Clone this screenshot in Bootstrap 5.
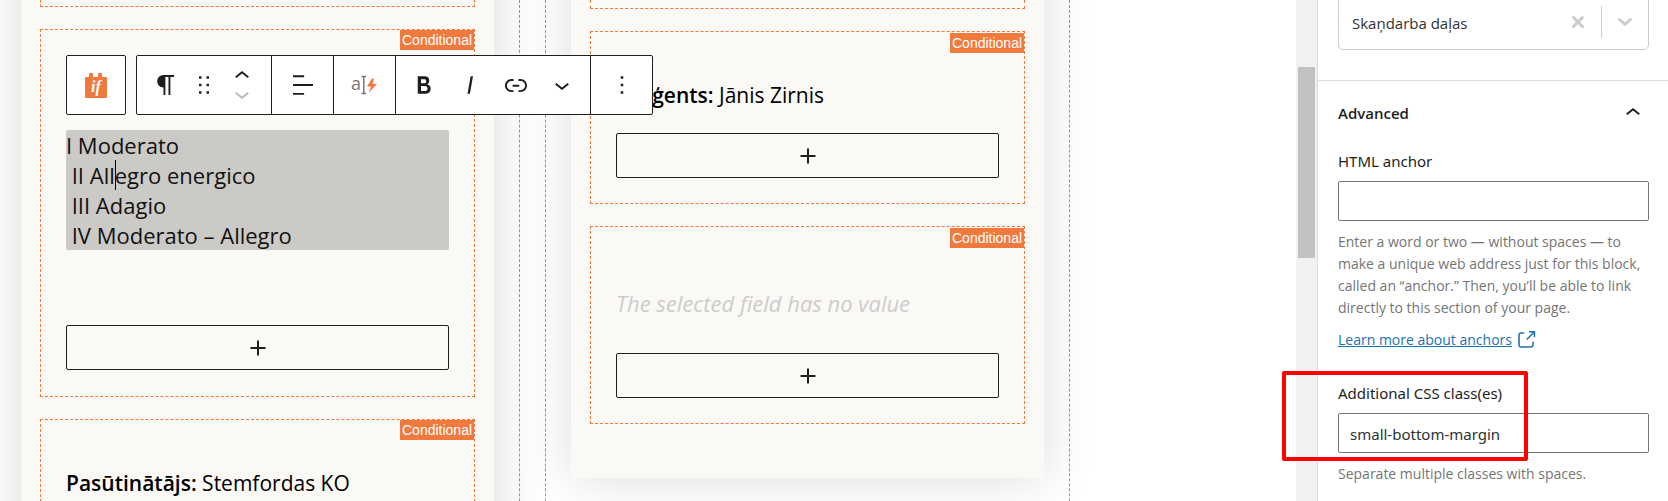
<!DOCTYPE html>
<html lang="en">
<head>
<meta charset="utf-8">
<meta name="viewport" content="width=device-width, initial-scale=1">
<title>Block editor</title>
<link href="https://cdn.jsdelivr.net/npm/bootstrap@5.3.0/dist/css/bootstrap.min.css" rel="stylesheet">
<style>
  :root { --accent: #f0793e; --ink: #1e1e1e; --cream: #fbf9f6; }
  body { font-family: "Open Sans", "Noto Sans", sans-serif; font-size: 15px; line-height: 22px; color: var(--ink); }
  svg { display: block; fill: currentColor; flex: none; }
  button { color: inherit; }

  /* canvas */
  .canvas { min-width: 0; }
  .block-cols { display: grid; grid-template-columns: 1fr 1fr; gap: 25px; margin-left: -5px; padding-right: 226px; height: 100%; }
  .outer { border: 1px dashed var(--accent); border-top: 0; border-bottom: 0; padding: 0 25px; min-width: 0; }
  .sheet { background: var(--cream); margin-top: -80px; padding: 80px 19px 54px; box-shadow: 0 0 50px rgba(0,0,0,.14); color: #000; font-size: 22px; line-height: 30px; }
  .sheet p { margin: 0; white-space: nowrap; }
  .sheet strong { font-weight: 600; }
  .cond { border: 1px dashed var(--accent); padding: 48px 25px 25px; margin-bottom: 22px; }
  .cond:last-child { margin-bottom: 0; }
  .cond-end { border-top: 0; padding: 0; height: 7px; }
  .cond-end.tall { height: 9px; }
  .cond-tag { position: absolute; top: 0; right: 0; background: var(--accent); color: #fff; font: 14px/20px "Liberation Sans", Arial, sans-serif; padding: 0 2px; width: 74px; }
  .cond-tag.low { top: 1px; }
  .space-tools { padding-top: 100px; padding-bottom: 26px; }
  .space-empty { padding-top: 61px; }
  .sheet .movements { background: #cccac6; border-radius: 2px; color: #111; margin-bottom: 75px; }
  .sheet .person { font-size: 21px; margin-bottom: 23px; }
  .sheet .empty-note { color: #ccc; font-style: italic; margin-bottom: 35px; }
  .caret-mark { display: inline-block; width: 1px; height: 30px; margin-right: -1px; background: #000; vertical-align: top; }
  .adder { height: 45px; width: 100%; background: transparent; border: 1px solid var(--ink); border-radius: 2px; color: var(--ink); }

  /* floating toolbar */
  .tools { position: absolute; top: 25px; left: 25px; z-index: 5; color: var(--ink); gap: 10px; }
  .tool-box { background: #fff; border: 1px solid var(--ink); border-radius: 2px; height: 60px; }
  .tool-set { padding: 0 5px; border-right: 1px solid var(--ink); }
  .tool-set:first-child { padding: 0 6px; }
  .tool-set:last-child { border-right: 0; }
  .tool { width: 46px; height: 58px; border: 0; background: none; padding: 0; display: flex; align-items: center; justify-content: center; }
  .tool.wide { width: 58px; }
  .tool.slim { width: 30px; }
  .tool.half { height: 18px; }
  .tool.single { width: 51px; }
  .tool:disabled { color: #bbb; }

  /* scrollbar and settings */
  .track { width: 21px; background: #f1f1f1; padding: 67px 2px 0; }
  .thumb { width: 17px; height: 191px; background: #c1c1c1; }
  .settings { width: 351px; border-left: 1px solid #ddd; background: #fff; }
  .settings-part { padding: 0 19px 0 20px; }
  .picker { height: 56px; margin-top: -6px; border: 1px solid #ccc; border-radius: 5px; }
  .picker select { appearance: none; border: 0; background: none; color: #333; padding: 2px 0 0 13px; font-size: 15px; outline: 0; min-width: 0; }
  .picker .split { width: 1px; height: 32px; background: #ccc; }
  .picker button { border: 0; background: none; padding: 0; width: 46px; display: flex; justify-content: center; color: #ccc; }
  .panel-head { border: 0; border-top: 1px solid #ddd; background: none; margin-top: 30px; padding: 0 20px; height: 64px; font-weight: 600; }
  .field-label, .field { font-family: "Noto Sans", "Open Sans", sans-serif; }
  .field-label { display: block; margin: 6px 0 9px; }
  .field { display: block; width: 100%; height: 40px; border: 1px solid #757575; border-radius: 2px; padding: 2px 11px 0; color: #2c3338; font-size: 15px; background: #fff; }
  .hint { color: #757575; font-size: 14px; line-height: 22px; margin: 10px 0; }
  .learn { color: #2271b1; }
  .marked { margin-top: 31px; }
  .marked .outline-mark { position: absolute; left: -56px; top: -11px; width: 246px; height: 90px; border: 4px solid #f00; border-radius: 2px; pointer-events: none; }
</style>
</head>
<body>
<div class="d-flex vh-100 overflow-hidden">

  <main class="canvas flex-grow-1 overflow-hidden">
    <div class="block-cols">
      <section class="outer">
        <div class="sheet">
          <div class="cond cond-end"></div>
          <div class="cond space-tools position-relative">
            <span class="cond-tag">Conditional</span>
            <div class="tools d-flex" role="toolbar" aria-label="Block tools">
              <div class="tool-box">
                <button class="tool wide" type="button" aria-label="Conditional block">
                  <svg width="22" height="26" viewBox="0 0 22 26"><path fill="#f0793e" d="M1 5h3V2q0-1 1-1h2q1 0 1 1v3h5V2q0-1 1-1h2q1 0 1 1v3h4q1 0 1 1v19q0 1-1 1H1q-1 0-1-1V6q0-1 1-1z"/><text x="11" y="20" text-anchor="middle" fill="#fff" font-family="Liberation Serif, serif" font-style="italic" font-weight="700" font-size="16">if</text></svg>
                </button>
              </div>
              <div class="tool-box d-flex">
                <div class="tool-set d-flex">
                  <button class="tool" type="button" aria-label="Paragraph"><svg width="30" height="30" viewBox="0 0 24 24"><path d="m9.996 14v-.225l.004 0v6.225h1.5v-14.5h2.5v14.5h1.5v-14.5h3v-1.5h-8.504c-2.761 0-5 2.239-5 5s2.239 5 5 5z"/></svg></button>
                  <button class="tool slim" type="button" aria-label="Drag"><svg width="30" height="30" viewBox="0 0 24 24"><path d="M8 7h2V5H8v2zm0 6h2v-2H8v2zm0 6h2v-2H8v2zm6-14v2h2V5h-2zm0 8h2v-2h-2v2zm0 6h2v-2h-2v2z"/></svg></button>
                  <div class="d-flex flex-column justify-content-center">
                    <button class="tool half" type="button" aria-label="Move up"><svg width="30" height="18" viewBox="0 5 24 14"><path d="M6.500 12.400L12 8l5.500 4.400-.9 1.200L12 10l-4.500 3.600-1-1.200z"/></svg></button>
                    <button class="tool half" type="button" aria-label="Move down" disabled><svg width="30" height="18" viewBox="0 5 24 14"><path d="M17.500 11.600L12 16l-5.500-4.400.9-1.200L12 14l4.500-3.600 1 1.200z"/></svg></button>
                  </div>
                </div>
                <div class="tool-set d-flex">
                  <button class="tool single" type="button" aria-label="Align"><svg width="30" height="30" viewBox="0 0 24 24"><path d="M4 19.800h8.900v-1.500H4v1.500zm8.900-15.600H4v1.500h8.900V4.200zm-8.900 7v1.500h16v-1.500H4z"/></svg></button>
                </div>
                <div class="tool-set d-flex">
                  <button class="tool single" type="button" aria-label="Dynamic text"><svg width="30" height="34" viewBox="-1 -6 30 34"><text x="0" y="16" fill="#777" font-family="Open Sans, sans-serif" font-size="18">a</text><path fill="none" stroke="#777" stroke-width="1.500" d="M10.500 2.500h4.500M10.500 19.500h4.500M12.800 2.500v17"/><path fill="#f0793e" d="M21 4.500l-5 8h4l-2 6 8-8.500h-4.500l1.500-5.500z"/></svg></button>
                </div>
                <div class="tool-set d-flex">
                  <button class="tool" type="button" aria-label="Bold"><svg width="30" height="30" viewBox="0 0 24 24"><path d="M14.700 11.300c1-.6 1.500-1.600 1.500-3 0-2.300-1.300-3.400-4-3.400H7v14h5.800c1.400 0 2.500-.3 3.300-1 .8-.7 1.200-1.700 1.200-2.900.1-1.900-.8-3.100-2.600-3.700zm-5.100-4h2.300c.6 0 1.100.1 1.400.4.300.3.500.7.500 1.200s-.2 1-.5 1.200c-.3.3-.8.4-1.400.4H9.600V7.300zm4.600 9c-.4.3-1 .4-1.700.4H9.600v-3.900h2.900c.7 0 1.300.2 1.700.5.4.3.6.8.6 1.500s-.2 1.200-.6 1.500z"/></svg></button>
                  <button class="tool" type="button" aria-label="Italic"><svg width="30" height="30" viewBox="0 0 24 24"><path d="M12.500 5L10 19h1.900l2.500-14z"/></svg></button>
                  <button class="tool" type="button" aria-label="Link"><svg width="30" height="30" viewBox="0 0 24 24"><path d="M15.600 7.200H14v1.500h1.600c2 0 3.700 1.700 3.700 3.700s-1.700 3.700-3.700 3.700H14v1.500h1.600c2.800 0 5.200-2.300 5.200-5.200 0-2.900-2.300-5.200-5.200-5.200zM4.700 12.400c0-2 1.700-3.700 3.700-3.700H10V7.200H8.400c-2.900 0-5.200 2.300-5.200 5.200 0 2.900 2.300 5.200 5.200 5.200H10v-1.500H8.400c-2 0-3.700-1.700-3.700-3.700zm4.600.9h5.300v-1.500H9.300v1.500z"/></svg></button>
                  <button class="tool" type="button" aria-label="More formatting"><svg width="30" height="30" viewBox="0 0 24 24"><path d="M17.500 11.600L12 16l-5.500-4.400.9-1.200L12 14l4.500-3.600 1 1.200z"/></svg></button>
                </div>
                <div class="tool-set d-flex">
                  <button class="tool single" type="button" aria-label="Options"><svg width="30" height="30" viewBox="0 0 24 24"><path d="M13 19h-2v-2h2v2zm0-6h-2v-2h2v2zm0-6h-2V5h2v2z"/></svg></button>
                </div>
              </div>
            </div>
            <p class="movements">I Moderato<br>&nbsp;II All<span class="caret-mark"></span>egro energico<br>&nbsp;III Adagio<br>&nbsp;IV Moderato – Allegro</p>
            <button class="adder d-flex align-items-center justify-content-center" type="button" aria-label="Add block"><svg width="30" height="30" viewBox="0 0 24 24"><path d="M18 11.200h-5.200V6h-1.600v5.200H6v1.600h5.200V18h1.600v-5.200H18z"/></svg></button>
          </div>
          <div class="cond position-relative">
            <span class="cond-tag">Conditional</span>
            <p class="person"><strong>Pasūtinātājs:</strong> Stemfordas KO</p>
          </div>
        </div>
      </section>

      <section class="outer">
        <div class="sheet">
          <div class="cond cond-end tall"></div>
          <div class="cond position-relative">
            <span class="cond-tag low">Conditional</span>
            <p class="person"><strong>Diriģents:</strong> Jānis Zirnis</p>
            <button class="adder d-flex align-items-center justify-content-center" type="button" aria-label="Add block"><svg width="30" height="30" viewBox="0 0 24 24"><path d="M18 11.200h-5.200V6h-1.600v5.200H6v1.600h5.200V18h1.600v-5.200H18z"/></svg></button>
          </div>
          <div class="cond space-empty position-relative">
            <span class="cond-tag low">Conditional</span>
            <p class="empty-note">The selected field has no value</p>
            <button class="adder d-flex align-items-center justify-content-center" type="button" aria-label="Add block"><svg width="30" height="30" viewBox="0 0 24 24"><path d="M18 11.200h-5.200V6h-1.600v5.200H6v1.600h5.200V18h1.600v-5.200H18z"/></svg></button>
          </div>
        </div>
      </section>
    </div>
  </main>

  <div class="track flex-shrink-0"><div class="thumb"></div></div>

  <aside class="settings flex-shrink-0">
    <div class="settings-part">
      <div class="picker d-flex align-items-center">
        <select class="flex-grow-1" aria-label="Field"><option>Skaņdarba daļas</option></select>
        <button type="button" aria-label="Clear"><svg width="14" height="14" viewBox="0 0 14 14"><path fill="none" stroke="currentColor" stroke-width="3" stroke-linecap="round" d="M2.500 2.500l9 9M11.500 2.500l-9 9"/></svg></button>
        <span class="split"></span>
        <button type="button" aria-label="Open"><svg width="16" height="10" viewBox="0 0 16 10"><path fill="none" stroke="currentColor" stroke-width="3" stroke-linecap="round" stroke-linejoin="round" d="M2.500 2.500L8 7.500l5.500-5"/></svg></button>
      </div>
    </div>
    <button class="panel-head d-flex w-100 align-items-center justify-content-between" type="button" aria-expanded="true">Advanced
      <svg width="30" height="30" viewBox="0 0 24 24"><path d="M6.500 12.400L12 8l5.500 4.400-.9 1.200L12 10l-4.500 3.600-1-1.200z"/></svg></button>
    <div class="settings-part">
      <label class="field-label" for="anchor">HTML anchor</label>
      <input class="field" id="anchor" type="text">
      <p class="hint">Enter a word or two — without spaces — to make a unique web address just for this block, called an “anchor.” Then, you’ll be able to link directly to this section of your page.</p>
      <div class="hint d-flex align-items-center"><a class="learn" href="#anchors">Learn more about anchors</a><svg class="learn ms-1" width="20" height="20" viewBox="2 2 20 20"><path d="M18.200 17c0 .7-.6 1.200-1.200 1.200H7c-.7 0-1.200-.6-1.200-1.200V7c0-.7.6-1.200 1.200-1.200h3.200V4.200H7C5.500 4.200 4.200 5.500 4.200 7v10c0 1.500 1.200 2.800 2.800 2.800h10c1.500 0 2.800-1.200 2.800-2.800v-3.600h-1.500V17zM14.900 3v1.500h3.700l-6.400 6.400 1.100 1.100 6.400-6.400v3.700h1.500V3h-6.300z"/></svg></div>
      <div class="marked position-relative">
        <label class="field-label" for="classes">Additional CSS class(es)</label>
        <input class="field" id="classes" type="text" value="small-bottom-margin">
        <span class="outline-mark"></span>
      </div>
      <p class="hint">Separate multiple classes with spaces.</p>
    </div>
  </aside>
</div>
<script src="https://cdn.jsdelivr.net/npm/bootstrap@5.3.0/dist/js/bootstrap.bundle.min.js"></script>
</body>
</html>
